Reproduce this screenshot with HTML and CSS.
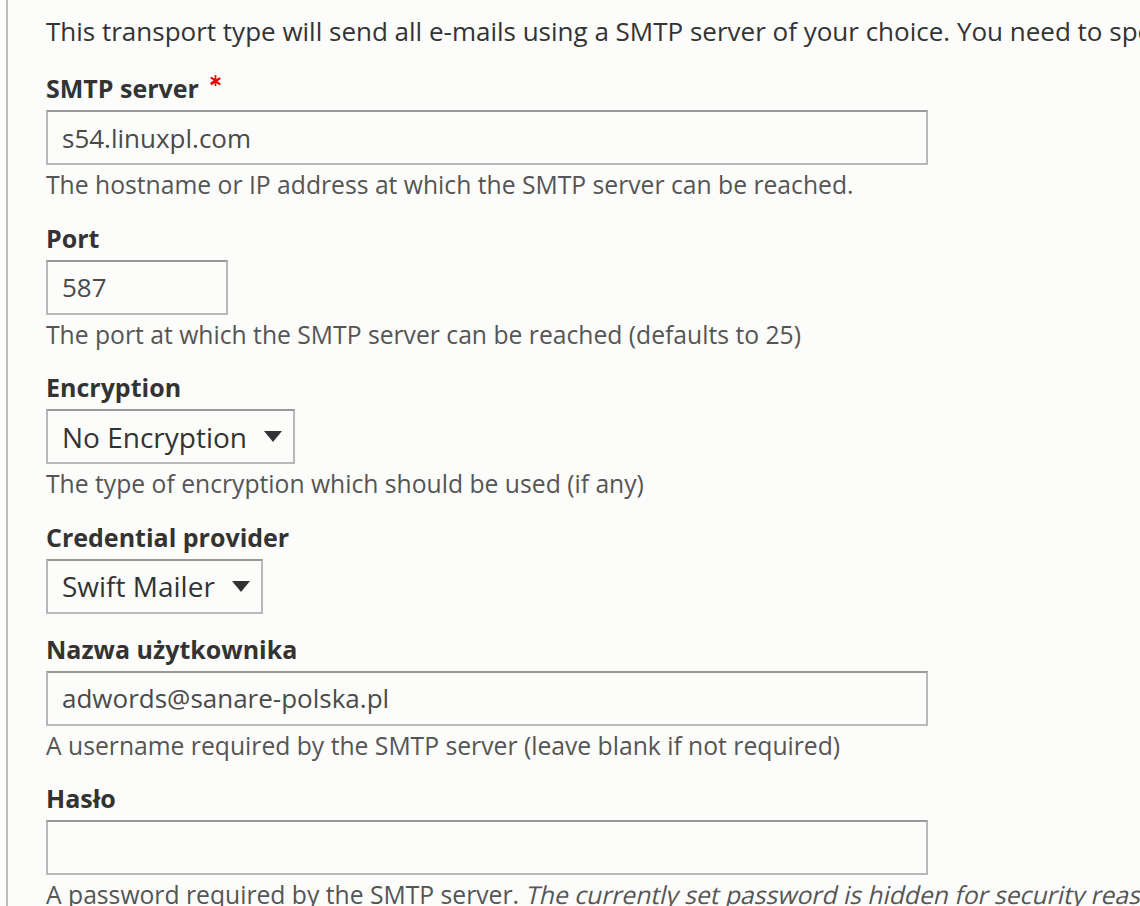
FILE: index.html
```html
<!DOCTYPE html>
<html lang="en">
<head>
<meta charset="utf-8">
<title>SMTP transport</title>
<link rel="stylesheet" href="styles.css">
</head>
<body>
<div class="wrapper">
  <p class="intro">This transport type will send all e-mails using a SMTP server of your choice. You need to specify the hostname and port.</p>

  <div class="form-item">
    <label class="label">SMTP server<svg class="req" viewBox="0 0 14 14" width="11" height="11" aria-hidden="true"><path d="M5.8 0h2.4l-.3 5.2 4.7-2.3 1.2 2.1-4.4 2.9 4.4 2.9-1.2 2.1-4.7-2.3.3 5.2H5.8l.3-5.2-4.7 2.3L.2 10l4.4-2.9L.2 4.2l1.2-2.1 4.7 2.3z" fill="#e00"/></svg></label>
    <div class="input input-wide">s54.linuxpl.com</div>
    <div class="desc">The hostname or IP address at which the SMTP server can be reached.</div>
  </div>

  <div class="form-item">
    <label class="label">Port</label>
    <div class="input input-port">587</div>
    <div class="desc">The port at which the SMTP server can be reached (defaults to 25)</div>
  </div>

  <div class="form-item">
    <label class="label">Encryption</label>
    <div class="select"><span>No Encryption</span><span class="arrow"></span></div>
    <div class="desc">The type of encryption which should be used (if any)</div>
  </div>

  <div class="form-item">
    <label class="label">Credential provider</label>
    <div class="select"><span>Swift Mailer</span><span class="arrow"></span></div>
  </div>

  <div class="form-item">
    <label class="label">Nazwa użytkownika</label>
    <div class="input input-wide">adwords@sanare-polska.pl</div>
    <div class="desc">A username required by the SMTP server (leave blank if not required)</div>
  </div>

  <div class="form-item">
    <label class="label">Hasło</label>
    <div class="input input-wide"></div>
    <div class="desc">A password required by the SMTP server. <em class="oblique">The currently set password is hidden for security reasons.</em></div>
  </div>
</div>
</body>
</html>
```

FILE: styles.css
```css
html, body {
  margin: 0;
  padding: 0;
  background: #fcfcfa;
  overflow: hidden;
}
body {
  font-family: "Open Sans", "Noto Sans", sans-serif;
  font-size: 24.7px;
  color: #333;
  line-height: 36px;
}
.wrapper {
  margin-left: 6px;
  border-left: 2px solid #bdbdbd;
  padding: 13px 0 0 38px;
  min-height: 906px;
  box-sizing: border-box;
  white-space: nowrap;
}
.intro {
  margin: 0 0 21px;
  font-size: 26px;
}
.form-item {
  margin: 0 0 17px;
}
.label {
  display: flex;
  align-items: flex-start;
  font-size: 25px;
  font-weight: 700;
  height: 36px;
  margin-bottom: 4px;
}
.req {
  margin: 5px 0 0 11px;
}
.input,
.select {
  box-sizing: border-box;
  height: 55px;
  border: 2px solid #b8b8b8;
  border-top-color: #999;
  background: #fcfcfa;
  padding: 0 14px;
  display: flex;
  align-items: center;
  color: #4a4a4a;
  font-size: 26px;
}
.input-wide { width: 882px; }
.input-port { width: 182px; }
.select {
  display: inline-flex;
  gap: 17px;
  padding-right: 11px;
  font-size: 28px;
  color: #333;
}
.arrow {
  width: 0;
  height: 0;
  border-left: 9px solid transparent;
  border-right: 9px solid transparent;
  border-top: 11px solid #333;
}
.desc {
  margin-top: 2px;
  line-height: 35.5px;
  color: #555;
}
.oblique {
  display: inline-block;
  font-style: normal;
  transform: skewX(-13deg);
  transform-origin: 0 75%;
}
```
